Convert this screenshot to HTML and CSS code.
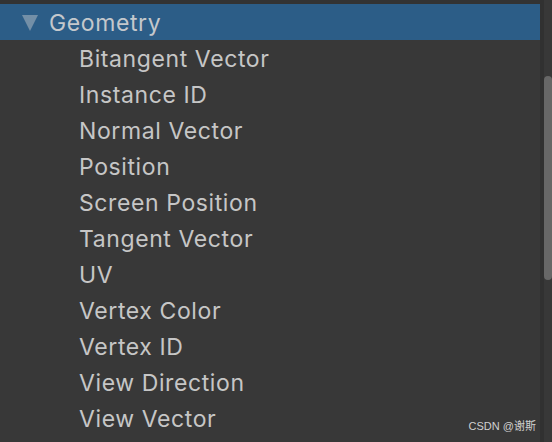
FILE: index.html
```html
<!DOCTYPE html>
<html>
<head>
<meta charset="utf-8">
<link rel="stylesheet" href="styles.css">
</head>
<body>
<div class="panel">
  <div class="tree">
    <div class="header">
      <svg class="arrow" width="16" height="16" viewBox="0 0 16 16"><polygon points="0,0 16,0 8,16" fill="#738fa7"/></svg>
      <span>Geometry</span>
    </div>
    <ul class="items">
      <li>Bitangent Vector</li>
      <li>Instance ID</li>
      <li>Normal Vector</li>
      <li>Position</li>
      <li>Screen Position</li>
      <li>Tangent Vector</li>
      <li>UV</li>
      <li>Vertex Color</li>
      <li>Vertex ID</li>
      <li>View Direction</li>
      <li>View Vector</li>
    </ul>
  </div>
  <div class="divider"></div>
  <div class="scroll"><div class="thumb"></div></div>
  <div class="watermark">CSDN @谢斯</div>
</div>
</body>
</html>
```
FILE: styles.css
```css
html, body {
  margin: 0;
  padding: 0;
  background: #383838;
}
.panel {
  position: relative;
  width: 552px;
  height: 442px;
  display: flex;
  background: #383838;
  overflow: hidden;
  font-family: Inter, "Noto Sans", sans-serif;
}
.tree {
  width: 542px;
  padding-top: 4px;
  background: linear-gradient(#333333 0 4px, #383838 4px);
}
.header {
  height: 36px;
  background: #2c5d87;
  display: flex;
  align-items: center;
  color: #c4c8cc;
  font-size: 23px;
  letter-spacing: 0.6px;
}
.header span {
  padding-top: 1px;
}
.arrow {
  margin-left: 22px;
  margin-right: 11px;
  margin-top: 2px;
}
.items {
  list-style: none;
  margin: 0;
  padding: 0;
}
.items li {
  height: 35px;
  padding-top: 1px;
  line-height: 36px;
  padding-left: 79px;
  color: #c6c6c6;
  font-size: 23px;
  letter-spacing: 0.6px;
}
.divider {
  width: 4px;
  background: #313131;
}
.scroll {
  flex: 1;
  padding-top: 76px;
}
.thumb {
  width: 8px;
  height: 204px;
  background: #676767;
  border-radius: 5px;
}
.watermark {
  position: absolute;
  right: 16px;
  bottom: 9px;
  font-family: "Liberation Sans", "Noto Sans CJK SC", sans-serif;
  font-size: 11px;
  color: #d0d0d0;
}
```
